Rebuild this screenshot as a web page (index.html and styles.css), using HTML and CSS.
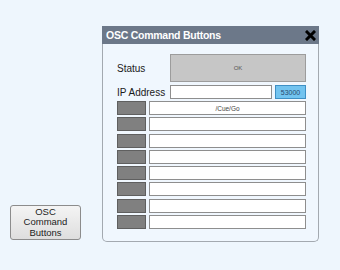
FILE: index.html
```html
<!DOCTYPE html>
<html>
<head>
<meta charset="utf-8">
<link rel="stylesheet" href="styles.css">
</head>
<body>
<div class="desk">
  <button class="launch">OSC<br>Command<br>Buttons</button>
  <div class="dialog">
    <div class="titlebar">
      <span class="title">OSC Command Buttons</span>
      <svg class="close" width="11" height="11" viewBox="0 0 11 11">
        <path d="M2 2 L9 9 M9 2 L2 9" stroke="#000" stroke-width="3" stroke-linecap="square"/>
      </svg>
    </div>
    <div class="content">
      <div class="row status-row">
        <span class="label">Status</span>
        <div class="status">OK</div>
      </div>
      <div class="row ip-row">
        <span class="label">IP Address</span>
        <div class="ip"></div>
        <div class="port">53000</div>
      </div>
      <div class="cmds">
        <div class="cmd"><div class="btn"></div><div class="field">/Cue/Go</div></div>
        <div class="cmd"><div class="btn"></div><div class="field"></div></div>
        <div class="cmd"><div class="btn"></div><div class="field"></div></div>
        <div class="cmd"><div class="btn"></div><div class="field"></div></div>
        <div class="cmd"><div class="btn"></div><div class="field"></div></div>
        <div class="cmd"><div class="btn"></div><div class="field"></div></div>
        <div class="cmd"><div class="btn"></div><div class="field"></div></div>
        <div class="cmd"><div class="btn"></div><div class="field"></div></div>
      </div>
    </div>
  </div>
</div>
</body>
</html>
```
FILE: styles.css
```css
html, body {
  margin: 0;
  padding: 0;
  background: #eef6fd;
  font-family: "Liberation Sans", Arial, sans-serif;
}
.desk {
  position: relative;
  width: 340px;
  height: 270px;
}
.launch {
  position: absolute;
  left: 10px;
  top: 205px;
  width: 71px;
  height: 35px;
  box-sizing: border-box;
  margin: 0;
  padding: 0;
  border: 1px solid #8c8c8c;
  border-radius: 3px;
  background: linear-gradient(#f4f4f4, #dedede);
  font-family: "Liberation Sans", Arial, sans-serif;
  font-size: 9.5px;
  line-height: 10.5px;
  color: #222;
  text-align: center;
}
.dialog {
  position: absolute;
  left: 102px;
  top: 26px;
  width: 217px;
  height: 216px;
  box-sizing: border-box;
  border: 1px solid #a3a9b0;
  border-top: none;
  border-radius: 0 0 5px 5px;
  background: #f0f7fe;
  display: flex;
  flex-direction: column;
}
.titlebar {
  height: 18px;
  margin: 0 -1px;
  background: #6c7889;
  display: flex;
  align-items: center;
  justify-content: space-between;
  padding: 0 3px 0 4px;
}
.title {
  color: #fff;
  font-weight: bold;
  font-size: 10.5px;
  letter-spacing: -0.25px;
}
.close {
  display: block;
}
.content {
  padding: 10px 0 0 14px;
  display: flex;
  flex-direction: column;
}
.row {
  display: flex;
  align-items: center;
}
.label {
  width: 53px;
  font-size: 10px;
  color: #1a1a1a;
}
.status-row {
  height: 28px;
}
.status {
  width: 136px;
  height: 28px;
  box-sizing: border-box;
  border: 1px solid #9c9c9c;
  background: #c6c6c6;
  color: #555;
  font-size: 6px;
  display: flex;
  align-items: center;
  justify-content: center;
}
.ip-row {
  margin-top: 3px;
  height: 14px;
  gap: 3px;
}
.ip-row .label {
  width: 50px;
}
.ip {
  width: 102px;
  height: 14px;
  box-sizing: border-box;
  border: 1px solid #8e8e8e;
  background: #fff;
}
.port {
  width: 31px;
  height: 14px;
  box-sizing: border-box;
  border: 1px solid #3e8fc4;
  background: #72c3ef;
  color: #2b4a70;
  font-size: 7px;
  display: flex;
  align-items: center;
  justify-content: center;
}
.cmds {
  margin-top: 2px;
  display: flex;
  flex-direction: column;
  gap: 2.3px;
}
.cmd {
  display: flex;
  gap: 3px;
  height: 14px;
}
.btn {
  width: 29px;
  box-sizing: border-box;
  border: 1px solid #5f5f5f;
  background: #808080;
}
.field {
  width: 157px;
  box-sizing: border-box;
  border: 1px solid #8e8e8e;
  background: #fff;
  color: #444;
  font-size: 6.5px;
  display: flex;
  align-items: center;
  justify-content: center;
}
```
